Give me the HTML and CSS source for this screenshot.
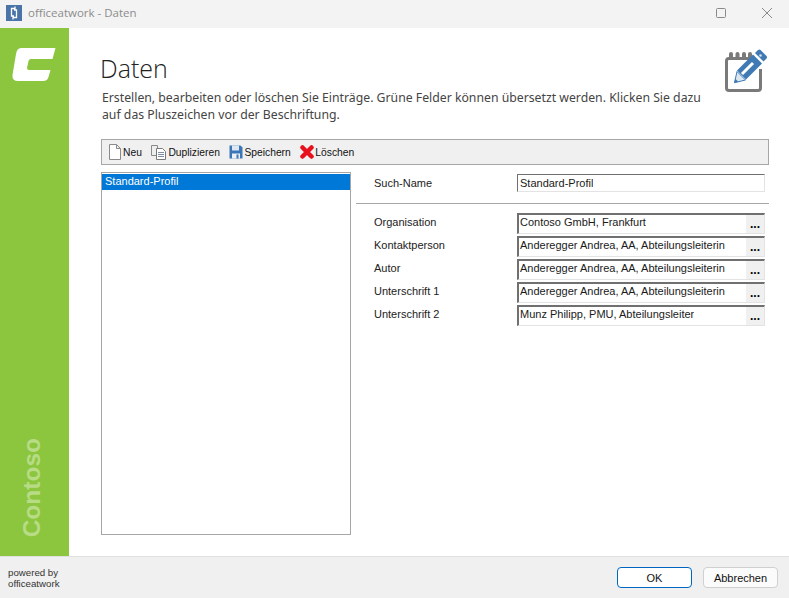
FILE: index.html
```html
<!DOCTYPE html>
<html lang="de">
<head>
<meta charset="utf-8">
<title>officeatwork - Daten</title>
<link rel="stylesheet" href="styles.css">
</head>
<body>
<div class="window">
  <header class="titlebar">
    <svg class="app-icon" width="16" height="16" viewBox="0 0 16 16"><rect width="16" height="16" fill="#4a74a8"/><path d="M9.500 3.500H5.500V11H8M9 1.500V5M6.500 12.500h4V5H8M7 11v3.500" fill="none" stroke="#fff" stroke-width="1.300"/></svg>
    <span class="title-text">officeatwork - Daten</span>
    <span class="win-controls">
      <svg width="12" height="12" viewBox="0 0 12 12"><rect x="1.500" y="1.500" width="9" height="9" rx="1" fill="none" stroke="#8a8a8a"/></svg>
      <svg width="12" height="12" viewBox="0 0 12 12"><path d="M1 1l10 10M11 1L1 11" stroke="#8a8a8a" fill="none"/></svg>
    </span>
  </header>
  <div class="body-row">
    <aside class="sidebar">
      <svg class="logo" width="44" height="33" viewBox="0 0 44 33"><path d="M9 0H43.500L40.500 11H19Q17 11 16.500 13L15 20Q15 22 17 22H38.500L36.500 29Q35.500 33 31 33H6Q0 33 .5 27L4 6Q5 0 9 0Z" fill="#fff"/></svg>
      <span class="brand">Contoso</span>
    </aside>
    <main class="content">
      <div class="head">
        <div class="head-text">
          <h1>Daten</h1>
          <p>Erstellen, bearbeiten oder löschen Sie Einträge. Grüne Felder können übersetzt werden. Klicken Sie dazu auf das Pluszeichen vor der Beschriftung.</p>
        </div>
        <svg class="head-icon" width="44" height="44" viewBox="0 0 44 44">
          <path d="M27 9.500H5a2.500 2.500 0 0 0-2.500 2.500v27A2.500 2.500 0 0 0 5 41.500h29a2.500 2.500 0 0 0 2.500-2.500V20" fill="none" stroke="#7a7a7a" stroke-width="3"/>
          <path d="M7 5v4M13.500 5v4M20 5v4M26 5v3" stroke="#7a7a7a" stroke-width="4" stroke-linecap="round"/>
          <path d="M13 21.500L29 5.500l9 9L22 30.500Z" fill="#3f7ab5"/>
          <path d="M31 4l3-3q1.500-1 2.500 0l6 6q1 1 0 2.500l-3 3Z" fill="#3f7ab5"/>
          <circle cx="36.500" cy="6.500" r="1.300" fill="#cfdeec"/>
          <path d="M18 25l11-11" stroke="#fff" stroke-width="3"/>
          <path d="M13 22.500l8.500 8.500-11 2.700Z" fill="#dbe6f1" stroke="#3f7ab5"/>
          <path d="M10.300 33.700l1-4 3 3Z" fill="#3f7ab5"/>
        </svg>
      </div>
      <nav class="toolbar">
        <span class="tool">
          <svg width="14" height="16" viewBox="0 0 14 16"><path d="M1.500 .5h7l4 4v11h-11Z M8.500 .5v4h4" fill="#fff" stroke="#8a8a8a"/></svg>Neu</span>
        <span class="tool">
          <svg width="16" height="16" viewBox="0 0 16 16"><path d="M.5 1.500h6v10h-6Z" fill="#eee" stroke="#8a8a8a"/><path d="M5.500 4.500h6l3 3v8h-9Z" fill="#fff" stroke="#7a7a7a"/><path d="M7 8.500h6M7 10.500h6M7 12.500h6" stroke="#7f8ea3"/></svg>Duplizieren</span>
        <span class="tool">
          <svg width="14" height="14" viewBox="0 0 14 14"><path d="M.5.5h11l2 2v11H.5Z" fill="#3b76b8"/><path d="M3 .5h7v5H3Z" fill="#dfe8f2"/><path d="M3 8.500h8v5H3Z" fill="#eef2f7"/><path d="M7.500 9.500h2v4h-2Z" fill="#3b76b8"/></svg>Speichern</span>
        <span class="tool">
          <svg width="14" height="14" viewBox="0 0 14 14"><path d="M2.500 2.500l9 9M11.500 2.500l-9 9" stroke="#e8101c" stroke-width="4.500" stroke-linecap="round"/></svg>Löschen</span>
      </nav>
      <div class="panes">
        <div class="list"><div class="list-item">Standard-Profil</div></div>
        <form class="form">
          <div class="row search">
            <span class="label">Such-Name</span>
            <span class="field"><span class="value">Standard-Profil</span></span>
          </div>
          <hr class="sep">
          <div class="rows">
            <div class="row"><span class="label">Organisation</span><span class="field"><span class="value">Contoso GmbH, Frankfurt</span><span class="dots">...</span></span></div>
            <div class="row"><span class="label">Kontaktperson</span><span class="field"><span class="value">Anderegger Andrea, AA, Abteilungsleiterin</span><span class="dots">...</span></span></div>
            <div class="row"><span class="label">Autor</span><span class="field"><span class="value">Anderegger Andrea, AA, Abteilungsleiterin</span><span class="dots">...</span></span></div>
            <div class="row"><span class="label">Unterschrift 1</span><span class="field"><span class="value">Anderegger Andrea, AA, Abteilungsleiterin</span><span class="dots">...</span></span></div>
            <div class="row"><span class="label">Unterschrift 2</span><span class="field"><span class="value">Munz Philipp, PMU, Abteilungsleiter</span><span class="dots">...</span></span></div>
          </div>
        </form>
      </div>
    </main>
  </div>
  <footer class="footer">
    <span class="powered">powered by<br>officeatwork</span>
    <span class="buttons">
      <button type="button" class="btn primary">OK</button>
      <button type="button" class="btn">Abbrechen</button>
    </span>
  </footer>
</div>
</body>
</html>
```
FILE: styles.css
```css
* { box-sizing: border-box; }
html, body { margin: 0; padding: 0; }
body { font-family: "Liberation Sans", Arial, sans-serif; font-size: 11px; color: #1a1a1a; background: #fff; }
.window { width: 789px; height: 598px; display: flex; flex-direction: column; overflow: hidden; }
.titlebar { height: 28px; flex: none; background: #f3f3f3; display: flex; align-items: center; padding: 0 0 3px 6px; }
.app-icon { margin-right: 6px; }
.title-text { font-size: 11.500px; color: #8c8c8c; font-family: "Open Sans", sans-serif; }
.win-controls { margin-left: auto; display: flex; gap: 34px; padding-right: 16px; }
.body-row { flex: 1; display: flex; min-height: 0; }
.sidebar { width: 69px; flex: none; background: #8cc63f; display: flex; flex-direction: column; align-items: center; justify-content: space-between; padding: 20px 0 19px 0; }
.logo { margin-left: -1px; }
.brand { writing-mode: vertical-rl; transform: rotate(180deg); font-family: "Liberation Sans", sans-serif; font-weight: 700; font-size: 24.500px; color: #b7dc85; line-height: 25px; margin-right: 6px; }
.content { flex: 1; padding: 0 20px 21px 32px; display: flex; flex-direction: column; min-width: 0; }
.head { display: flex; height: 111px; flex: none; position: relative; }
.head-text { width: 610px; }
h1 { margin: 0 0 0 -1px; padding-top: 22px; font-family: "Open Sans", sans-serif; font-weight: 300; font-size: 25px; line-height: 36px; color: #222; }
p { margin: 3px 0 0 1px; font-family: "Noto Sans", sans-serif; font-size: 12.250px; line-height: 17px; color: #444; }
.head-icon { position: absolute; right: 1px; top: 21px; }
.toolbar { height: 26px; flex: none; background: #f0f0f0; border: 1px solid #a6a6a6; display: flex; align-items: center; padding-left: 6px; gap: 9.500px; }
.tool { display: flex; align-items: center; gap: 1px; font-size: 10.300px; color: #111; }
.panes { flex: 1; display: flex; margin-top: 7px; min-height: 0; }
.list { width: 250px; flex: none; border: 1px solid #a6a6a6; padding-top: 1px; }
.list-item { height: 16px; line-height: 15px; background: #0078d7; color: #fff; padding-left: 3px; }
.form { flex: 1; padding: 2px 4px 0 5px; }
.row { display: flex; align-items: center; height: 18px; }
.label { width: 161px; padding-left: 18px; color: #222; flex: none; }
.field { flex: 1; height: 100%; display: flex; justify-content: space-between; background: #fff; border: 1px solid #e3e3e3; border-top-color: #707070; border-left-color: #707070; min-width: 0; }
.value { padding-left: 2px; line-height: 16px; white-space: nowrap; overflow: hidden; }
.rows .value { padding-left: 1px; line-height: 15px; }
.sep { margin: 11px -4px 9px 0; border: 0; border-top: 1px solid #a6a6a6; }
.rows { display: flex; flex-direction: column; gap: 2px; }
.rows .row { height: 21px; }
.rows .field { border-top-width: 2px; border-left-width: 2px; }
.rows .label { margin-top: -4px; }
.dots { width: 18px; background: #f0f0f0; text-align: center; font-weight: 700; font-size: 12px; line-height: 18px; flex: none; color: #000; }
.footer { height: 42px; flex: none; background: #f0f0f0; border-top: 1px solid #e0e0e0; display: flex; align-items: center; justify-content: space-between; padding: 0 11px 0 8px; }
.powered { font-size: 9.700px; line-height: 11px; color: #333; }
.buttons { display: flex; gap: 11px; }
.btn { width: 75px; height: 21px; padding: 0; font: 11px "Liberation Sans", sans-serif; color: #111; background: #fbfbfb; border: 1px solid #d0d0d0; border-radius: 4px; }
.primary { border-color: #0067c0; background: #fff; }
```
